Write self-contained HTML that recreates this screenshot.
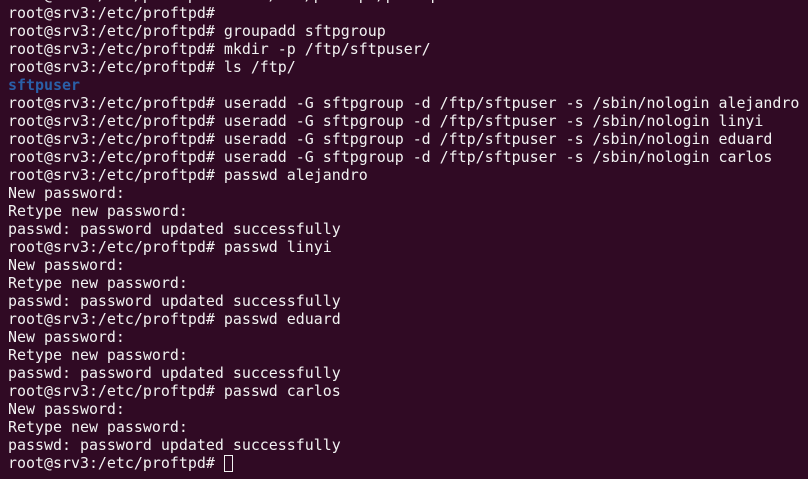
<!DOCTYPE html>
<html><head><meta charset="utf-8"><style>
html,body{margin:0;padding:0;background:#300a24;width:808px;height:479px;overflow:hidden}
pre{margin:0;position:absolute;left:8px;top:-14px;font-family:"DejaVu Sans Mono","Liberation Mono",monospace;font-size:14.95px;line-height:18px;color:#f2f2f2;white-space:pre}
.b{color:#2a5fa8;font-weight:bold}
.c{display:inline-block;width:9px;height:17px;border:1px solid #f2f2f2;box-sizing:border-box;vertical-align:-4px}
</style></head><body><pre>root@srv3:/etc/proftpd# nano /etc/proftpd/proftpd.conf
root@srv3:/etc/proftpd#
root@srv3:/etc/proftpd# groupadd sftpgroup
root@srv3:/etc/proftpd# mkdir -p /ftp/sftpuser/
root@srv3:/etc/proftpd# ls /ftp/
<span class="b">sftpuser</span>
root@srv3:/etc/proftpd# useradd -G sftpgroup -d /ftp/sftpuser -s /sbin/nologin alejandro
root@srv3:/etc/proftpd# useradd -G sftpgroup -d /ftp/sftpuser -s /sbin/nologin linyi
root@srv3:/etc/proftpd# useradd -G sftpgroup -d /ftp/sftpuser -s /sbin/nologin eduard
root@srv3:/etc/proftpd# useradd -G sftpgroup -d /ftp/sftpuser -s /sbin/nologin carlos
root@srv3:/etc/proftpd# passwd alejandro
New password:
Retype new password:
passwd: password updated successfully
root@srv3:/etc/proftpd# passwd linyi
New password:
Retype new password:
passwd: password updated successfully
root@srv3:/etc/proftpd# passwd eduard
New password:
Retype new password:
passwd: password updated successfully
root@srv3:/etc/proftpd# passwd carlos
New password:
Retype new password:
passwd: password updated successfully
root@srv3:/etc/proftpd# <span class="c"></span></pre></body></html>
